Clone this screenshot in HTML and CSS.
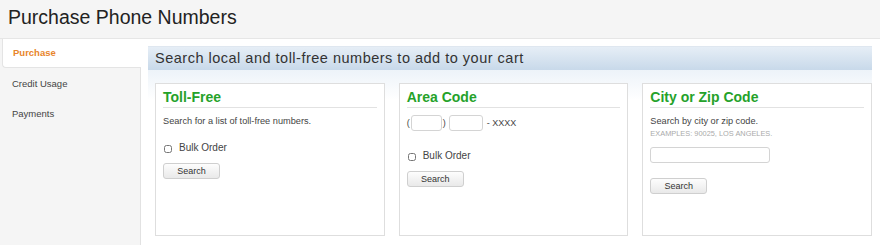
FILE: index.html
```html
<!DOCTYPE html>
<html lang="en">
<head>
    <meta charset="UTF-8">
    <title>Purchase Phone Numbers</title>
    <link rel="stylesheet" href="styles.css">
</head>
<body>
    <h1 class="page-title">Purchase Phone Numbers</h1>

    <div class="layout">
        <nav class="sidebar">
            <a class="tab active" href="#">Purchase</a>
            <a class="tab" href="#">Credit Usage</a>
            <a class="tab" href="#">Payments</a>
        </nav>

        <main class="main">
            <div class="banner">Search local and toll-free numbers to add to your cart</div>

            <div class="cards">
                <section class="card">
                    <h2>Toll-Free</h2>
                    <p class="desc">Search for a list of toll-free numbers.</p>
                    <label class="check"><input type="checkbox"> Bulk Order</label>
                    <button class="btn">Search</button>
                </section>

                <section class="card">
                    <h2>Area Code</h2>
                    <div class="area-row">
                        <span>(</span><input type="text" class="code"><span>)</span>
                        <input type="text" class="code second">
                        <span class="suffix">- XXXX</span>
                    </div>
                    <label class="check area-check"><input type="checkbox"> Bulk Order</label>
                    <button class="btn">Search</button>
                </section>

                <section class="card">
                    <h2>City or Zip Code</h2>
                    <p class="desc">Search by city or zip code.</p>
                    <p class="hint">Examples: 90025, Los Angeles.</p>
                    <input type="text" class="city">
                    <button class="btn city-btn">Search</button>
                </section>
            </div>
        </main>
    </div>
</body>
</html>
```

FILE: styles.css
```css
body {
    margin: 0;
    font-family: "Liberation Sans", Arial, sans-serif;
    color: #333;
    background: #f5f5f5;
    height: 245px;
    overflow: hidden;
}

.page-title {
    margin: 0;
    padding: 6px 8px 0;
    height: 32px;
    font-size: 19.5px;
    font-weight: normal;
    color: #222;
}

.layout {
    display: flex;
    border-top: 1px solid #e6e6e6;
    height: 206px;
}

.sidebar {
    width: 140px;
    flex-shrink: 0;
    border-right: 1px solid #e2e2e2;
}

.tab {
    display: block;
    height: 29px;
    line-height: 29px;
    padding-left: 12px;
    font-size: 9.5px;
    color: #444;
    text-decoration: none;
}

.tab.active {
    margin-left: 2px;
    margin-right: -1px;
    padding-left: 10px;
    height: 28px;
    line-height: 28px;
    background: #fff;
    border: 1px solid #e4e4e4;
    border-right: none;
    border-top: none;
    border-radius: 0 0 0 4px;
    color: #e8852b;
    font-weight: bold;
    position: relative;
}

.tab + .tab {
    margin-top: 1px;
}

.main {
    flex: 1;
    background: #fff;
    padding: 7px 8px 0 7px;
}

.banner {
    height: 23px;
    line-height: 23px;
    padding-left: 7px;
    font-size: 14.5px;
    letter-spacing: 0.5px;
    color: #333;
    background: linear-gradient(#e6eef6, #c8d9ea);
    border-top: 1px solid #dfe7f0;
}

.cards {
    display: flex;
    gap: 14px;
    padding: 13px 0 0 7px;
    background: linear-gradient(#edf3f9, #fff 30px);
}

.card {
    flex: 1;
    height: 153px;
    border: 1px solid #dedede;
    padding: 0 7px;
    background: #fff;
    box-sizing: border-box;
}

.card h2 {
    margin: 5px 0 0;
    padding-bottom: 2px;
    font-size: 14px;
    line-height: 16px;
    color: #25a22a;
    border-bottom: 1px solid #e2e2e2;
    height: 16px;
}

.desc {
    margin: 8px 0 0;
    font-size: 9.2px;
    color: #444;
}

.hint {
    margin: 3px 0 0;
    font-size: 7.4px;
    text-transform: uppercase;
    color: #aaa;
}

.check {
    display: flex;
    align-items: center;
    margin-top: 16px;
    font-size: 10px;
    color: #444;
}

.check input {
    width: 8px;
    height: 8px;
    margin: 2px 7px 0 1px;
}

.area-check {
    margin-top: 19px;
}

.btn {
    display: block;
    margin-top: 10px;
    width: 57px;
    height: 16px;
    padding: 0;
    font-family: inherit;
    font-size: 9px;
    color: #333;
    background: linear-gradient(#fdfdfd, #e9e9e9);
    border: 1px solid #cfcfcf;
    border-radius: 3px;
}

.area-row {
    display: flex;
    align-items: center;
    margin-top: 7px;
    font-size: 9px;
    color: #444;
}

.code {
    width: 31px;
    height: 16px;
    margin: 0 1px;
    border: 1px solid #d4d4d4;
    border-radius: 3px;
    padding: 0;
    box-sizing: border-box;
}

.code.second {
    width: 34px;
    margin-left: 3px;
}

.suffix {
    margin-left: 3px;
}

.city {
    display: block;
    width: 120px;
    height: 16px;
    margin-top: 9px;
    border: 1px solid #d4d4d4;
    border-radius: 3px;
    box-sizing: border-box;
}

.city-btn {
    margin-top: 15px;
}
```
